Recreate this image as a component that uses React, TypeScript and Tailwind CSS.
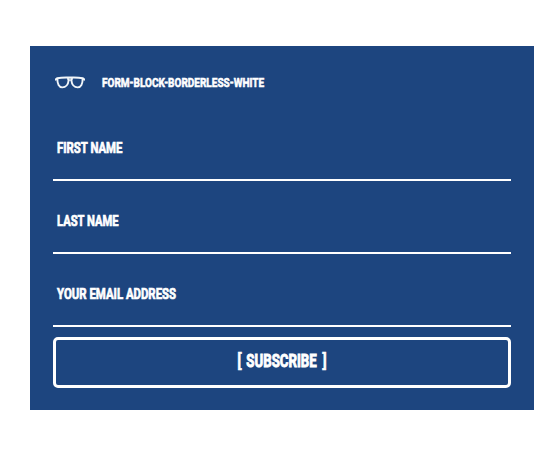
import React from "react";

function Glasses() {
  return (
    <svg width="30" height="14" viewBox="0 0 30 14" fill="none" stroke="#f1f5f9" strokeLinejoin="round" className="mt-0.5 shrink-0">
      <path d="M0.1 4.2 L2.2 2.2 C7 1.3 10 1.4 15 1.6 C20 1.4 23 1.3 27.8 2.2 L29.9 4.2" strokeWidth="2.1" />
      <path d="M2.4 2.8 C2.2 7.8 4 11.4 7.4 11.4 C10.8 11.4 13.2 8.4 13.5 4.8 C13.6 3.6 13.2 2.6 12.2 2.4" strokeWidth="1.9" />
      <path d="M27.6 2.8 C27.8 7.8 26 11.4 22.6 11.4 C19.2 11.4 16.8 8.4 16.5 4.8 C16.4 3.6 16.8 2.6 17.8 2.4" strokeWidth="1.9" />
      <path d="M13.3 4.4 Q15 3.5 16.7 4.4" strokeWidth="1.3" />
    </svg>
  );
}

function Field({ label, scale }: { label: string; scale: string }) {
  return (
    <label className="flex h-[73px] items-start border-b-2 border-white pl-1 pt-[30px] text-[15px] leading-5">
      <span className={"inline-block origin-left whitespace-nowrap [-webkit-text-stroke:0.7px_white] " + scale}>{label}</span>
    </label>
  );
}

export default function App() {
  return (
    <div className="h-[451px] w-[556px] bg-white pl-[30px] pt-[46px] font-['Roboto',sans-serif] font-bold text-white">
      <section className="flex h-[364px] w-[504px] flex-col bg-[#1d457f] px-[23px] pt-[26px]">
        <header className="flex h-5 items-center pl-0.5">
          <Glasses />
          <span className="ml-[17px] mt-px inline-block origin-left scale-x-[0.77] whitespace-nowrap text-[13px] leading-5 [-webkit-text-stroke:0.6px_white]">
            FORM-BLOCK-BORDERLESS-WHITE
          </span>
        </header>
        <form className="mt-4 flex flex-col">
          <Field label="FIRST NAME" scale="scale-x-[0.757]" />
          <Field label="LAST NAME" scale="scale-x-[0.745]" />
          <Field label="YOUR EMAIL ADDRESS" scale="scale-x-[0.76]" />
          <button type="button" className="mt-2.5 flex h-[51px] items-center justify-center rounded-[5px] border-[3px] border-white pb-[3px]">
            <span className="flex w-[90px] items-center justify-between text-[17.5px] leading-6">
              <span className="font-medium [-webkit-text-stroke:0.4px_white]">[</span>
              <span className="flex w-[71px] justify-center">
                <span className="inline-block scale-x-[0.757] whitespace-nowrap [-webkit-text-stroke:0.9px_white]">SUBSCRIBE</span>
              </span>
              <span className="font-medium [-webkit-text-stroke:0.4px_white]">]</span>
            </span>
          </button>
        </form>
      </section>
    </div>
  );
}
